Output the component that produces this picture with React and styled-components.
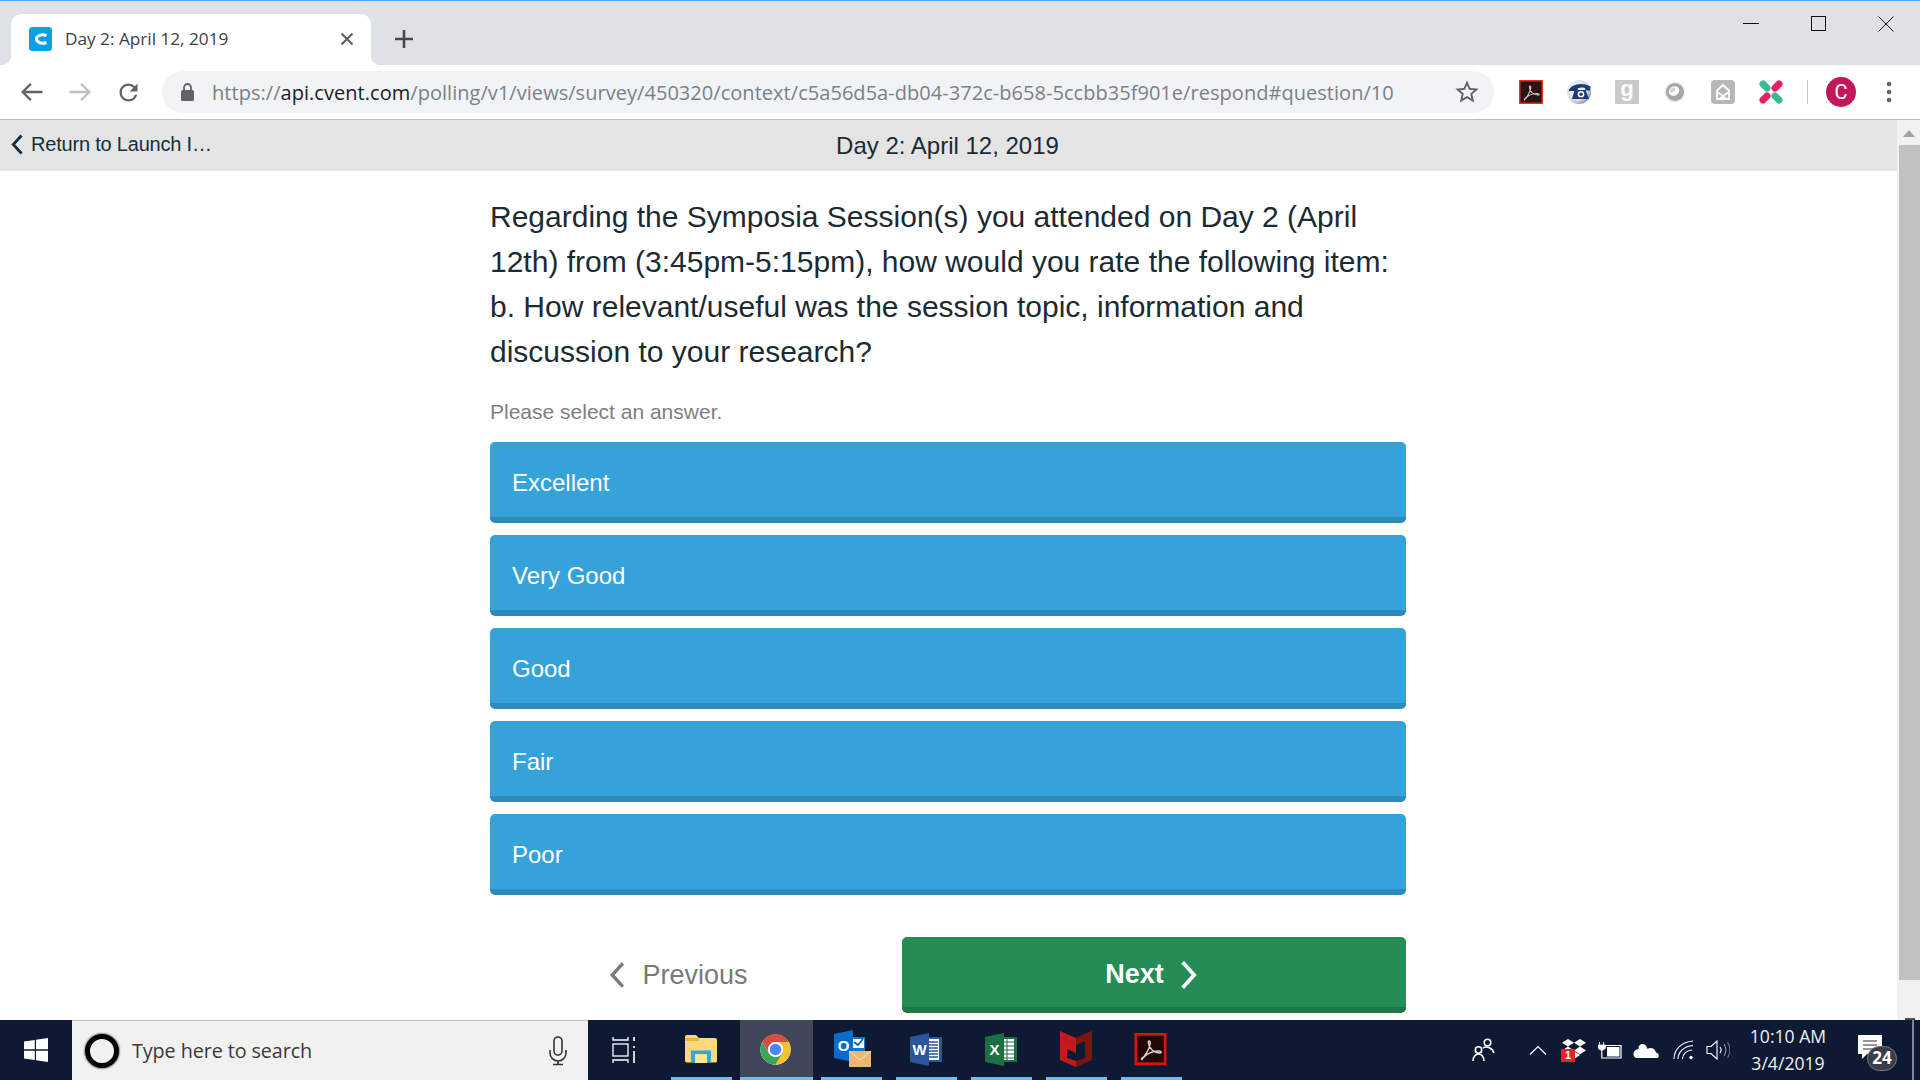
import React from "react";
import styled, { createGlobalStyle } from "styled-components";

const Global = createGlobalStyle`
  html, body { margin: 0; padding: 0; height: 100%; overflow: hidden; background: #fff; }
  #root { height: 100%; }
  * { box-sizing: border-box; }
`;
const UI = `"Open Sans", "Noto Sans", sans-serif`;
const WEB = `"Liberation Sans", Arial, sans-serif`;

const Screen = styled.div`
  width: 1920px; height: 1080px; display: flex; flex-direction: column; overflow: hidden;
`;
const TabStrip = styled.header`
  height: 65px; flex: none; display: flex; align-items: flex-end; padding-left: 11px;
  background: #dee1e6; border-top: 1px solid #4aa3f5;
`;
const Tab = styled.div`
  position: relative; width: 360px; height: 51px; background: #fff; border-radius: 10px 10px 0 0;
  display: flex; align-items: center; padding: 0 12px 2px 18px;
  &::before, &::after { content: ""; position: absolute; bottom: 0; width: 10px; height: 10px; }
  &::before { left: -10px; background: radial-gradient(circle at 0 0, transparent 10px, #fff 10.5px); }
  &::after { right: -10px; background: radial-gradient(circle at 100% 0, transparent 10px, #fff 10.5px); }
`;
const TabTitle = styled.span`
  font: 400 17.2px ${UI}; color: #3c4043; margin-left: 13px; flex: 1; white-space: nowrap;
`;
const PlainButton = styled.span`
  display: flex; align-items: center; justify-content: center; flex: none;
  width: ${p => p.$w || 48}px; height: ${p => p.$h || 48}px;
`;
const NewTab = styled(PlainButton)`
  width: 34px; height: 51px; margin-left: 16px; padding-bottom: 2px;
`;
const WindowControls = styled.div`
  margin-left: auto; margin-right: -1px; align-self: flex-start; display: flex;
`;
const Toolbar = styled.div`
  height: 54px; flex: none; display: flex; align-items: center; padding: 0 7px 0 8px; background: #fff;
`;
const Omnibox = styled.div`
  width: 1332px; height: 42px; margin-left: 10px; border-radius: 21px; background: #f1f3f4;
  display: flex; align-items: center; padding: 0 13px 0 17px;
`;
const Url = styled.div`
  flex: 1; min-width: 0; margin-left: 15px; font: 400 20px ${UI}; color: #7b8188; white-space: nowrap;
  letter-spacing: 0.04px;
  b { font-weight: 400; color: #202124; }
`;
const Extensions = styled.div`
  display: flex; align-items: center; margin-left: 13px;
`;
const Divider = styled.span`
  width: 1px; height: 24px; background: #c4c4c4; margin: 0 9px 0 12px;
`;
const Avatar = styled.span`
  width: 30px; height: 30px; border-radius: 50%; background: #c2185b; color: #fff;
  font: 400 20px Roboto, sans-serif; display: flex; align-items: center; justify-content: center;
`;
const Main = styled.div`
  flex: 1; min-height: 0; display: flex; border-top: 1px solid #bcbcbc;
`;
const Page = styled.main`
  flex: 1; min-width: 0; display: flex; flex-direction: column; background: #fff;
`;
const SubHeader = styled.div`
  height: 51px; flex: none; background: #e4e4e4; display: grid; grid-template-columns: 1fr auto 1fr; align-items: center;
  padding-right: 2px;
`;
const BackLink = styled.a`
  display: flex; align-items: center; gap: 7px; padding: 0 0 3px 10px;
  font: 400 20px ${WEB}; color: #12303f; letter-spacing: -0.2px;
`;
const SessionTitle = styled.h1`
  margin: 0; font: 400 24px ${WEB}; color: #1c2a33;
`;
const Column = styled.section`
  width: 916px; margin-left: 490px; padding-top: 23px;
`;
const Question = styled.h2`
  margin: 0; font: 400 30px/45px ${WEB}; color: #1c2a33;
`;
const Hint = styled.p`
  margin: 26px 0 18px; font: 400 21px/24px ${WEB}; color: #808080;
`;
const Options = styled.div`
  display: flex; flex-direction: column; gap: 12px;
`;
const Option = styled.button`
  height: 81px; border: 0; border-bottom: 6px solid #2d8bbb; border-radius: 5px; background: #36a2da;
  color: #fff; font: 400 24px ${WEB}; text-align: left; padding: 6px 22px 0;
`;
const Nav = styled.div`
  margin-top: 42px; display: grid; grid-template-columns: 376px 504px; justify-content: space-between;
`;
const Previous = styled.button`
  height: 76px; border: 0; background: none; color: #7a7a7a; font: 400 27px ${WEB};
  display: flex; align-items: center; justify-content: center; gap: 16px;
`;
const Next = styled.button`
  height: 76px; border: 0; border-bottom: 6px solid #1f7646; border-radius: 5px; background: #258c56;
  color: #fff; font: 700 27px ${WEB}; display: flex; align-items: center; justify-content: center; gap: 15px; padding: 5px 4px 0 0;
`;
const Scrollbar = styled.aside`
  width: 23px; flex: none; background: #f1f1f1; display: flex; flex-direction: column; align-items: flex-end;
`;
const ScrollUp = styled.span`
  width: 100%; height: 25px; flex: none; display: flex; align-items: center; justify-content: center;
  &::after { content: ""; border: 6px solid transparent; border-top: 0; border-bottom: 7px solid #a3a3a3; margin-top: 2px; }
`;
const Thumb = styled.span`
  width: 21px; height: 835px; background: #c1c1c1; flex: none;
`;
const ScrollDownTip = styled.span`
  margin-top: auto; margin-right: 5px; width: 10px; height: 2px; background: #505050; flex: none;
`;
const Taskbar = styled.footer`
  height: 60px; flex: none; display: flex; align-items: stretch; background: #0e1a33; color: #fff;
`;
const StartSlot = styled.span`
  width: 72px; flex: none; display: flex; align-items: center; justify-content: center;
`;
const SearchBox = styled.div`
  width: 516px; flex: none; display: flex; align-items: center; background: #f1f1f1; border-top: 1px solid #c0c0c6; padding: 0 21px 0 13px;
`;
const Cortana = styled.span`
  width: 34px; height: 34px; border-radius: 50%; border: 5px solid #000; box-shadow: 0 0 1.5px 1px #888; background: #f1f1f1; flex: none;
`;
const SearchText = styled.span`
  flex: 1; margin-left: 13px; font: 400 19.8px ${UI}; color: #3a3a3a; letter-spacing: -0.1px;
`;
const TaskView = styled.span`
  width: 76px; flex: none; display: flex; align-items: center; justify-content: center; padding-right: 2px;
`;
const TaskItem = styled.span`
  position: relative; width: 75px; flex: none; display: flex; align-items: center; justify-content: center; padding: 0 2px 2px 0;
  ${p => p.$active && `&::before { content: ""; position: absolute; left: 1px; right: 1px; top: 0; bottom: 0; background: #3f4759; }`}
  &::after { content: ""; position: absolute; bottom: 0; height: 3px; left: ${p => p.$active ? 1 : 7}px; right: ${p => p.$active ? 1 : 7}px; background: #76b9ed; }
  svg { position: relative; }
`;
const Tray = styled.div`
  margin-left: auto; width: 460px; display: flex; align-items: center;
`;
const TraySlot = styled.span`
  position: relative; width: ${p => p.$w || 36}px; margin-right: ${p => p.$mr || 0}px; flex: none; display: flex; align-items: center; justify-content: center;
`;
const Clock = styled.div`
  width: 104px; flex: none; text-align: center; font: 400 17.6px/27px ${UI}; color: #eef0f4;
`;
const DropBadge = styled.span`
  position: absolute; left: 5px; top: 10px; width: 14px; height: 13px; background: #e3242b; color: #fff;
  font: 700 11px/13px ${WEB}; text-align: center;
`;
const NotifSlot = styled(TraySlot)`
  padding-bottom: 5px;
`;
const NotifBadge = styled.span`
  position: absolute; left: 27px; top: 11px; width: 30px; height: 25px; border-radius: 13px; background: #3a3d46; border: 1px solid #777;
  color: #fff; font: 700 17px/22px ${UI}; text-align: center;
`;
const DesktopEdge = styled.span`
  flex: 1; align-self: stretch; display: flex; justify-content: flex-end; padding-right: 6px;
  &::after { content: ""; width: 2px; background: #7f8693; }
`;

const ICON = "#5f6368";
const Arrow = ({ color, flip }) => (
  <svg width="28" height="28" viewBox="0 0 24 24" fill="none" stroke={color} strokeWidth="2" style={flip ? { transform: "scaleX(-1)" } : undefined}>
    <path d="M21 12H4M11 5l-7 7 7 7" />
  </svg>
);
const Chevron = ({ dir, color, w = 18, h = 28, sw = 3.2 }) => (
  <svg width={w} height={h} viewBox="0 0 17 26" fill="none" stroke={color} strokeWidth={sw}>
    <path d={dir === "left" ? "M14 2 4 13l10 11" : "M3 2l10 11L3 24"} />
  </svg>
);
const AcrobatMark = ({ stroke = "#d9cfcf" }) => (
  <path d="M5 19.500c3-1.600 6-7 6.800-11.800.3-2-1.600-2.500-1.400-.4.4 4 3.700 7.400 8.400 7.700 2 .1 1.400-1.500-.8-1.500-4.400 0-9.600 2.400-12 5.700-.6.900 0 1.100-.7.3z" fill="none" stroke={stroke} strokeWidth="1.100" />
);

const Favicon = () => (
  <svg width="23" height="24" viewBox="0 0 23 24">
    <rect width="23" height="24" rx="3.500" fill="#0aa0e8" />
    <path d="M17.500 8.500A6.500 4.200 0 1 0 17.500 15.500" fill="none" stroke="#fff" strokeWidth="3" />
  </svg>
);
const Phone = () => (
  <svg width="24" height="24" viewBox="0 0 24 24">
    <defs><radialGradient id="ph" cx=".35" cy=".35" r=".8"><stop offset="0" stopColor="#fff" /><stop offset=".65" stopColor="#d5d9e0" /><stop offset="1" stopColor="#6b7484" /></radialGradient></defs>
    <circle cx="12" cy="12" r="12" fill="url(#ph)" />
    <path d="M1.500 11C3 5 14 1 23.500 6.500L23 10.500h-4.500L18 8c-2.500-.7-5-.5-7 .2L10.500 11z" fill="#1f3a78" />
    <path d="M7.500 10h11l3.500 9H5z" fill="#1f3a78" />
    <circle cx="14" cy="14.300" r="3.300" fill="#fff" />
    <circle cx="14" cy="14.300" r="1.700" fill="#1f3a78" />
  </svg>
);
const GSquare = () => (
  <svg width="24" height="24" viewBox="0 0 24 24">
    <rect width="24" height="24" fill="#c9c9c9" />
    <text x="12" y="15.500" textAnchor="middle" fontFamily="Liberation Sans" fontWeight="700" fontSize="22" fill="#fff">g</text>
  </svg>
);
const Ring = () => (
  <svg width="24" height="24" viewBox="0 0 24 24">
    <circle cx="12" cy="12" r="10.500" fill="#ededed" />
    <circle cx="12" cy="12" r="9" fill="#a6a6a6" />
    <ellipse cx="11" cy="11" rx="5.500" ry="4.500" fill="#fff" transform="rotate(-30 11 11)" />
    <ellipse cx="9.500" cy="10" rx="3" ry="2" fill="#d6d6d6" transform="rotate(-30 9.500 10)" />
  </svg>
);
const MailHouse = () => (
  <svg width="24" height="24" viewBox="0 0 24 24">
    <rect width="24" height="24" rx="4" fill="#b7b7b7" />
    <path d="M6 10.500 12 5l6 5.500V19H6zM6 12l6 4 6-4M9 19l3-3 3 3" fill="none" stroke="#fff" strokeWidth="1.800" />
  </svg>
);
const XPills = () => (
  <svg width="24" height="24" viewBox="0 0 24 24" strokeWidth="7" strokeLinecap="round">
    <path d="M4 4 8 8M20 20l-4-4" stroke="#38bb91" />
    <path d="M20 4 16 8M4 20l4-4" stroke="#ea1c68" />
  </svg>
);
const WinLogo = () => (
  <svg width="24" height="24" viewBox="0 0 24 24" fill="#fff">
    <path d="M0 3.400 10.800 2v9.300H0zM12 1.800 24 0v11.300H12zM0 12.700h10.800V22L0 20.600zM12 12.700h12V24l-12-1.800z" />
  </svg>
);
const Mic = () => (
  <svg width="18" height="30" viewBox="0 0 18 30" fill="none" stroke="#333" strokeWidth="1.600">
    <rect x="5" y="1" width="8" height="18" rx="4" />
    <path d="M1 14v3a8 8 0 0 0 16 0v-3M9 25v3M4 28.500h10" />
  </svg>
);
const TaskViewIcon = () => (
  <svg width="28" height="28" viewBox="0 0 28 28" fill="none" stroke="#fff" strokeWidth="1.300">
    <path d="M2 1v3h15V1M2 27v-3h15v3" />
    <rect x="2" y="8" width="15" height="12" />
    <path d="M23 1v4M23 10v2M23 15v12" strokeWidth="1.600" />
  </svg>
);
const FolderIcon = () => (
  <svg width="33" height="30" viewBox="0 0 33 30">
    <path d="M1 3c0-1 .7-2 2-2h9l3 3h16c1 0 2 .7 2 2v21c0 1-.7 1.500-2 1.500H3c-1.300 0-2-.7-2-2z" fill="#fcd97e" />
    <path d="M1 4h14v3H1z" fill="#e8b63e" />
    <path d="M7 28V16.500h20V28h-4V20H11v8z" fill="#2fa7e0" />
    <path d="M11 21h12v8H11z" fill="#fde58f" />
  </svg>
);
const ChromeIcon = () => (
  <svg width="33" height="33" viewBox="0 0 24 24">
    <circle cx="12" cy="12" r="11" fill="#fff" />
    <path d="M2.470 6.500A11 11 0 0 1 21.530 6.500H12A5.500 5.500 0 0 0 7.240 14.750Z" fill="#db4c3f" />
    <path d="M21.530 6.500A11 11 0 0 1 12 23L16.760 14.750A5.500 5.500 0 0 0 12 6.500Z" fill="#f2c230" />
    <path d="M2.470 6.500 7.240 14.750A5.500 5.500 0 0 0 16.760 14.750L12 23A11 11 0 0 1 2.470 6.500Z" fill="#3aa457" />
    <circle cx="12" cy="12" r="5.200" fill="#fff" />
    <circle cx="12" cy="12" r="4.200" fill="#4f86ec" />
  </svg>
);
const OutlookIcon = () => (
  <svg width="38" height="38" viewBox="0 0 38 38" style={{ marginLeft: 4 }}>
    <path d="M14 7H31V24H14z" fill="#1a74c9" />
    <path d="M19 9h11v9H19z" fill="#fff" />
    <path d="M20 12l4 3 5-6" fill="none" stroke="#0a62b8" strokeWidth="1.800" />
    <path d="M0 4 19 0V32L0 28z" fill="#0a6cc8" />
    <text x="9.500" y="21" textAnchor="middle" fontFamily="Liberation Sans" fontWeight="700" fontSize="15" fill="#fff">O</text>
    <path d="M15 21H37V37H15z" fill="#ecb772" />
    <path d="M15 21l11 9 11-9" fill="none" stroke="#fbe2bd" strokeWidth="1" />
  </svg>
);
const OfficeIcon = ({ dark, mid, letter, grid }) => (
  <svg width="32" height="33" viewBox="0 0 32 33">
    <path d="M14 4H32V29H14z" fill={mid} />
    <path d="M17 6H29V27H17z" fill="#fff" />
    {grid
      ? <path d="M17 9h12M17 13h12M17 17h12M17 21h12M17 25h12M22 6v21" stroke={mid} strokeWidth="1" />
      : <path d="M18 9h10M18 12h10M18 15h10M18 18h10M18 21h10M18 24h10" stroke={mid} strokeWidth="1.400" />}
    <path d="M0 4 19 0V33L0 29z" fill={dark} />
    <text x="9.500" y="22" textAnchor="middle" fontFamily="Liberation Sans" fontWeight="700" fontSize="15" fill="#fff">{letter}</text>
  </svg>
);
const McAfeeIcon = () => (
  <svg width="32" height="36" viewBox="0 0 32 36">
    <path d="M0 5.500 16 13V22L7 18V27L16 30V36L0 29z" fill="#c41a1a" />
    <path d="M32 0V29L16 36V30L25 27V10L16 14V13z" fill="#7c1410" />
    <path d="M0 0 16 7 32 0V6L16 13 0 6z" fill="#c41a1a" />
    <path d="M16 7 32 0V6L16 13z" fill="#7c1410" />
  </svg>
);
const Dropbox = () => (
  <svg width="24" height="22" viewBox="0 0 24 22" fill="#fff">
    <path d="M6 0l6 3.800L6 7.600 0 3.800zM18 0l6 3.800-6 3.800-6-3.800zM6 7.600l6 3.800-6 3.800-6-3.800zM18 7.600l6 3.800-6 3.800-6-3.800zM6 16l6-3.800L18 16l-6 4z" />
  </svg>
);
const Battery = () => (
  <svg width="24" height="17" viewBox="0 0 24 17">
    <path d="M1.500 0v3M5.500 0v3M0 3h7.500v2.500C7.500 7 6 8 3.800 8S0 7 0 5.500z" fill="#fff" stroke="#fff" strokeWidth=".8" />
    <path d="M3.800 8v8H8" fill="none" stroke="#fff" strokeWidth="1.200" />
    <path d="M8 3.500h15v12.500H8" fill="none" stroke="#fff" strokeWidth="1.200" />
    <rect x="9" y="5" width="12.500" height="9.500" fill="#fff" />
  </svg>
);
const Cloud = () => (
  <svg width="26" height="16" viewBox="0 0 26 16" fill="#fff">
    <path d="M7 16h17c2.500 0 2.500-5-1-5.500C22 6 17 5 14.500 7 13 0 5 1 5.500 7 1 7-2 14 3 16z" />
  </svg>
);
const Wifi = () => (
  <svg width="22" height="20" viewBox="0 0 22 20" fill="none" stroke="#fff" strokeWidth="1.100" style={{ marginLeft: 3 }}>
    <path d="M1 19C1 9 9 2 20 1M5 19C5 12 11 6 20 5.500M9.500 19c0-5 4-8.500 9.500-9" />
    <circle cx="18" cy="17.500" r="1.700" fill="#fff" stroke="none" />
  </svg>
);
const Volume = () => (
  <svg width="24" height="20" viewBox="0 0 24 20" fill="none" stroke="#fff" strokeWidth="1.100">
    <path d="M1 6.500h4L11 1v18l-6-5.500H1z" />
    <path d="M14 7c1.500 2 1.500 4 0 6" />
    <path d="M18 4c2.500 4 2.500 8 0 12" stroke="#8a93a3" />
    <path d="M21.500 2c3 5 3 11 0 16" stroke="#6a7384" />
  </svg>
);
const People = () => (
  <svg width="24" height="24" viewBox="0 0 24 24" fill="none" stroke="#fff" strokeWidth="1.600">
    <circle cx="6.500" cy="12" r="3.200" />
    <path d="M1 23c0-4 2.500-7 5.500-7s5.500 3 5.500 7" />
    <circle cx="15.500" cy="4.500" r="3.300" />
    <path d="M11 10c3-2 9-1 11 5" />
  </svg>
);
const Notification = () => (
  <svg width="24" height="26" viewBox="0 0 24 26">
    <path d="M0 0h24v19H9l-5 5v-5H0z" fill="#fff" />
    <path d="M5 6h14M5 10h14M5 14h14" stroke="#333" strokeWidth="1.200" />
  </svg>
);

const answers = ["Excellent", "Very Good", "Good", "Fair", "Poor"];
const tasks = [
  { key: "f", el: <FolderIcon /> },
  { key: "c", el: <ChromeIcon />, active: true },
  { key: "o", el: <OutlookIcon /> },
  { key: "w", el: <OfficeIcon dark="#2b579a" mid="#2b579a" letter="W" /> },
  { key: "x", el: <OfficeIcon dark="#1c7044" mid="#1c7044" letter="X" grid /> },
  { key: "m", el: <McAfeeIcon /> },
  { key: "a", el: (
    <svg width="33" height="32" viewBox="0 0 24 24">
      <rect x="1" y="1" width="22" height="22" fill="#220707" stroke="#e01010" strokeWidth="2" />
      <AcrobatMark />
    </svg>
  ) },
];

export default function App() {
  return (
    <Screen>
      <Global />
      <TabStrip>
        <Tab>
          <Favicon />
          <TabTitle>Day 2: April 12, 2019</TabTitle>
          <PlainButton $w={24} $h={24}>
            <svg width="14" height="14" viewBox="0 0 14 14" stroke={ICON} strokeWidth="2.200"><path d="M1.500 1.500l11 11M12.500 1.500l-11 11" /></svg>
          </PlainButton>
        </Tab>
        <NewTab>
          <svg width="18" height="18" viewBox="0 0 18 18" stroke="#45484d" strokeWidth="2.600"><path d="M9 0v18M0 9h18" /></svg>
        </NewTab>
        <WindowControls>
          <PlainButton $w={68} $h={45}><svg width="16" height="2"><path d="M0 .5h16" stroke="#111" strokeWidth="1" /></svg></PlainButton>
          <PlainButton $w={66} $h={45}><svg width="15" height="15"><rect x=".5" y=".5" width="14" height="14" fill="none" stroke="#111" /></svg></PlainButton>
          <PlainButton $w={70} $h={45}><svg width="16" height="16" stroke="#111"><path d="M.5.500l15 15M15.500.500l-15 15" /></svg></PlainButton>
        </WindowControls>
      </TabStrip>

      <Toolbar>
        <PlainButton><Arrow color={ICON} /></PlainButton>
        <PlainButton><Arrow color="#bdbfc2" flip /></PlainButton>
        <PlainButton>
          <svg width="27" height="27" viewBox="0 0 24 24" fill={ICON}><path d="M17.650 6.350A7.958 7.958 0 0 0 12 4c-4.420 0-7.990 3.580-7.990 8s3.570 8 7.990 8c3.730 0 6.840-2.550 7.730-6h-2.080A5.990 5.990 0 0 1 12 18c-3.310 0-6-2.690-6-6s2.690-6 6-6c1.660 0 3.140.690 4.220 1.780L13 11h7V4l-2.350 2.350z" /></svg>
        </PlainButton>
        <Omnibox>
          <svg width="18" height="20" viewBox="0 0 18 20" fill={ICON} style={{ flex: "none" }}>
            <rect x="2" y="8" width="13" height="11" rx="1.500" />
            <path d="M5 9V5.500a3.500 3.500 0 0 1 7 0V9" fill="none" stroke={ICON} strokeWidth="1.800" />
          </svg>
          <Url>https://<b>api.cvent.com</b>/polling/v1/views/survey/450320/context/c5a56d5a-db04-372c-b658-5ccbb35f901e/respond#question/10</Url>
          <svg width="28" height="28" viewBox="0 0 24 24" fill={ICON} style={{ flex: "none" }}><path d="M22 9.240l-7.190-.620L12 2 9.190 8.630 2 9.240l5.460 4.730L5.820 21 12 17.270 18.180 21l-1.630-7.030L22 9.240zM12 15.400l-3.760 2.270 1-4.280-3.320-2.880 4.380-.380L12 6.100l1.710 4.040 4.380.380-3.320 2.880 1 4.280L12 15.400z" /></svg>
        </Omnibox>
        <Extensions>
          <PlainButton>
            <svg width="24" height="24" viewBox="0 0 24 24">
              <rect x=".75" y=".75" width="22.500" height="22.500" fill="#2c1214" stroke="#e8330f" strokeWidth="1.500" />
              <AcrobatMark />
            </svg>
          </PlainButton>
          <PlainButton><Phone /></PlainButton>
          <PlainButton><GSquare /></PlainButton>
          <PlainButton><Ring /></PlainButton>
          <PlainButton><MailHouse /></PlainButton>
          <PlainButton><XPills /></PlainButton>
          <Divider />
          <PlainButton><Avatar>C</Avatar></PlainButton>
          <PlainButton>
            <svg width="6" height="24" viewBox="0 0 6 24" fill={ICON}><circle cx="3" cy="4" r="2.300" /><circle cx="3" cy="12" r="2.300" /><circle cx="3" cy="20" r="2.300" /></svg>
          </PlainButton>
        </Extensions>
      </Toolbar>

      <Main>
        <Page>
          <SubHeader>
            <BackLink>
              <Chevron dir="left" color="#12303f" w={14} h={23} sw={3.400} />
              Return to Launch I…
            </BackLink>
            <SessionTitle>Day 2: April 12, 2019</SessionTitle>
            <span />
          </SubHeader>
          <Column>
            <Question>Regarding the Symposia Session(s) you attended on Day 2 (April 12th) from (3:45pm-5:15pm), how would you rate the following item: b. How relevant/useful was the session topic, information and discussion to your research?</Question>
            <Hint>Please select an answer.</Hint>
            <Options>
              {answers.map(a => <Option key={a}>{a}</Option>)}
            </Options>
            <Nav>
              <Previous><Chevron dir="left" color="#7a7a7a" />Previous</Previous>
              <Next>Next<Chevron dir="right" color="#fff" w={20} h={30} /></Next>
            </Nav>
          </Column>
        </Page>
        <Scrollbar>
          <ScrollUp />
          <Thumb />
          <ScrollDownTip />
        </Scrollbar>
      </Main>

      <Taskbar>
        <StartSlot><WinLogo /></StartSlot>
        <SearchBox>
          <Cortana />
          <SearchText>Type here to search</SearchText>
          <Mic />
        </SearchBox>
        <TaskView><TaskViewIcon /></TaskView>
        {tasks.map(t => <TaskItem key={t.key} $active={t.active}>{t.el}</TaskItem>)}
        <Tray>
          <TraySlot $w={48} $mr={12}><People /></TraySlot>
          <TraySlot>
            <svg width="18" height="10" viewBox="0 0 18 10" fill="none" stroke="#fff" strokeWidth="1.200"><path d="M1 9.500l8-8 8 8" /></svg>
          </TraySlot>
          <TraySlot><Dropbox /><DropBadge>1</DropBadge></TraySlot>
          <TraySlot><Battery /></TraySlot>
          <TraySlot><Cloud /></TraySlot>
          <TraySlot><Wifi /></TraySlot>
          <TraySlot><Volume /></TraySlot>
          <Clock>10:10 AM<br />3/4/2019</Clock>
          <NotifSlot $w={60}><Notification /><NotifBadge>24</NotifBadge></NotifSlot>
          <DesktopEdge />
        </Tray>
      </Taskbar>
    </Screen>
  );
}
